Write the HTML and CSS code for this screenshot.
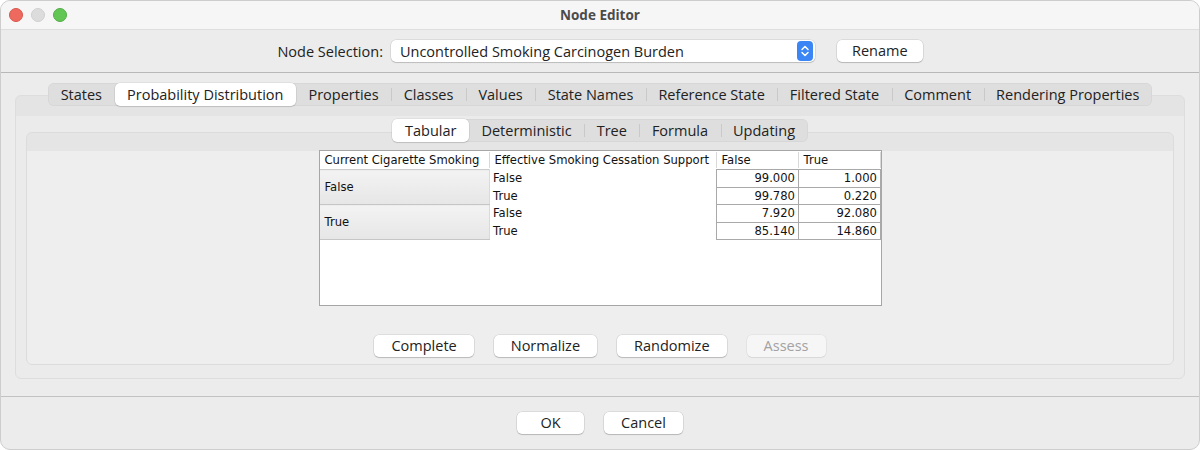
FILE: index.html
```html
<!DOCTYPE html>
<html lang="en">
<head>
  <meta charset="UTF-8" />
  <title>Node Editor</title>
  <link rel="stylesheet" href="styles.css">
</head>
<body>
  <div class="window">
    <div class="titlebar">
      <div class="lights">
        <span class="light red"></span>
        <span class="light gray"></span>
        <span class="light green"></span>
      </div>
      <div class="title">Node Editor</div>
    </div>

    <div class="header">
      <span class="label">Node Selection:</span>
      <div class="combo">
        <span>Uncontrolled Smoking Carcinogen Burden</span>
        <svg class="stepper" width="16" height="20" viewBox="0 0 16 20">
          <rect width="16" height="20" rx="4" fill="#3b86f4"/>
          <path d="M5 8.5 L8 5.5 L11 8.5" stroke="#fff" stroke-width="1.5" fill="none" stroke-linecap="round" stroke-linejoin="round"/>
          <path d="M5 11.5 L8 14.5 L11 11.5" stroke="#fff" stroke-width="1.5" fill="none" stroke-linecap="round" stroke-linejoin="round"/>
        </svg>
      </div>
      <button class="btn rename">Rename</button>
    </div>

    <div class="main">
      <div class="tabs">
        <span class="tab">States</span>
        <span class="tab active">Probability Distribution</span>
        <span class="tab">Properties</span>
        <span class="tab">Classes</span>
        <span class="tab">Values</span>
        <span class="tab">State Names</span>
        <span class="tab">Reference State</span>
        <span class="tab">Filtered State</span>
        <span class="tab">Comment</span>
        <span class="tab">Rendering Properties</span>
      </div>
      <div class="panel">
        <div class="tabs sub">
          <span class="tab active">Tabular</span>
          <span class="tab">Deterministic</span>
          <span class="tab">Tree</span>
          <span class="tab">Formula</span>
          <span class="tab">Updating</span>
        </div>
        <div class="inner">
          <div class="scroll">
            <table class="cpt">
              <colgroup>
                <col class="c1"><col class="c2"><col class="c3"><col class="c4">
              </colgroup>
              <thead>
                <tr>
                  <th>Current Cigarette Smoking</th>
                  <th>Effective Smoking Cessation Support</th>
                  <th>False</th>
                  <th>True</th>
                </tr>
              </thead>
              <tbody>
                <tr>
                  <td class="rowhead" rowspan="2">False</td>
                  <td class="state">False</td>
                  <td class="num">99.000</td>
                  <td class="num">1.000</td>
                </tr>
                <tr>
                  <td class="state">True</td>
                  <td class="num">99.780</td>
                  <td class="num">0.220</td>
                </tr>
                <tr>
                  <td class="rowhead" rowspan="2">True</td>
                  <td class="state">False</td>
                  <td class="num">7.920</td>
                  <td class="num">92.080</td>
                </tr>
                <tr>
                  <td class="state">True</td>
                  <td class="num">85.140</td>
                  <td class="num">14.860</td>
                </tr>
              </tbody>
            </table>
          </div>
          <div class="actions">
            <button class="btn">Complete</button>
            <button class="btn">Normalize</button>
            <button class="btn">Randomize</button>
            <button class="btn" disabled>Assess</button>
          </div>
        </div>
      </div>
    </div>

    <div class="footer">
      <button class="btn">OK</button>
      <button class="btn">Cancel</button>
    </div>
  </div>
</body>
</html>
```

FILE: styles.css
```css
body {
  margin: 0;
  background: #fff;
  font-family: 'Open Sans', sans-serif;
  font-size: 14.5px;
  color: #222;
}

.window {
  width: 1200px;
  height: 450px;
  box-sizing: border-box;
  border: 1px solid #cdcdcd;
  border-radius: 10px;
  background: #ececec;
  overflow: hidden;
  display: flex;
  flex-direction: column;
}

.titlebar {
  height: 28px;
  flex: none;
  background: #f6f6f6;
  border-bottom: 1px solid #dedede;
  display: flex;
  align-items: center;
  justify-content: center;
  position: relative;
}

.lights {
  position: absolute;
  left: 8px;
  top: 7px;
  display: flex;
  gap: 8px;
}

.light {
  width: 14px;
  height: 14px;
  border-radius: 50%;
  box-sizing: border-box;
}

.light.red { background: #ee6a5f; border: 1px solid #d9544a; }
.light.gray { background: #dcdcdc; border: 1px solid #cfcfcf; }
.light.green { background: #62c655; border: 1px solid #52ad46; }

.title {
  font-size: 13.5px;
  font-weight: bold;
  color: #4b4b4b;
}

.header {
  height: 42px;
  flex: none;
  border-bottom: 1px solid #b8b8b8;
  display: flex;
  align-items: center;
  justify-content: center;
}

.label {
  margin-right: 8px;
}

.combo {
  width: 424px;
  height: 22px;
  box-sizing: border-box;
  background: #fff;
  border-radius: 5px;
  box-shadow: 0 0 0 0.5px rgba(0,0,0,0.14), 0 1px 1px rgba(0,0,0,0.14);
  display: flex;
  align-items: center;
  justify-content: space-between;
  padding: 0 2px 0 9px;
  margin-right: 22px;
}

.btn {
  font-family: 'Open Sans', sans-serif;
  font-size: 14.5px;
  color: #222;
  height: 22px;
  min-width: 67px;
  padding: 0 17px;
  background: #fff;
  border: none;
  border-radius: 5px;
  box-shadow: 0 0 0 0.5px rgba(0,0,0,0.14), 0 1px 1px rgba(0,0,0,0.16);
  line-height: 22px;
}

.btn.rename {
  padding: 0 15px;
}

.btn:disabled {
  background: #f6f6f6;
  color: #a2a2a2;
  box-shadow: 0 0 0 0.5px rgba(0,0,0,0.07), 0 1px 1px rgba(0,0,0,0.06);
}

.main {
  flex: 1;
  padding: 10px 14px 16px;
}

.tabs {
  display: flex;
  justify-content: center;
  width: max-content;
  margin: 0 auto -11px;
  height: 23px;
  background: #dedede;
  border-radius: 6px;
  box-shadow: inset 0 0 0 0.5px rgba(0,0,0,0.06);
  position: relative;
}

.tab {
  display: flex;
  align-items: center;
  padding: 0 12.5px;
  line-height: 23px;
  background: linear-gradient(#c9c9c9, #c9c9c9) left center / 1px 13px no-repeat;
}

.tab:first-child,
.tab.active + .tab {
  background: none;
}

.tab.active {
  background: #fff;
  border-radius: 5px;
  box-shadow: 0 0 0 0.5px rgba(0,0,0,0.1), 0 1px 1px rgba(0,0,0,0.12);
}

.panel {
  height: 284px;
  box-sizing: border-box;
  border: 1px solid #dddddd;
  border-radius: 6px;
  background: linear-gradient(#e4e4e4 0, #e4e4e4 20px, #ebebeb 20px);
  padding: 23px 10px 13px;
}

.tabs.sub {
  margin-bottom: -10px;
}

.inner {
  height: 233px;
  box-sizing: border-box;
  border: 1px solid #dcdcdc;
  border-radius: 6px;
  background: linear-gradient(#e5e5e5 0, #e5e5e5 18px, #eeeeee 18px);
  padding: 17px 0 0;
}

.scroll {
  width: 563px;
  height: 156px;
  box-sizing: border-box;
  margin: 0 auto;
  background: #fff;
  border: 1px solid #a6a6a6;
}

.cpt {
  border-collapse: collapse;
  table-layout: fixed;
  width: 561px;
  font-family: 'DejaVu Sans', sans-serif;
  font-size: 11.6px;
  color: #111;
}

.c1 { width: 170px; }
.c2 { width: 227px; }
.c3 { width: 82px; }
.c4 { width: 82px; }

.cpt th {
  height: 18px;
  padding: 0 0 0 5px;
  font-weight: normal;
  text-align: left;
  white-space: nowrap;
  background: linear-gradient(#d9d9d9, #d9d9d9) right center / 1px 16px no-repeat;
}

.cpt td {
  height: 16.5px;
  padding: 0;
  white-space: nowrap;
}

.cpt .rowhead {
  padding-left: 5px;
  background: linear-gradient(#f3f3f3, #e6e6e6);
  border-top: 1px solid #cccccc;
  border-bottom: 1px solid #c6c6c6;
  border-right: 1px solid #dadada;
}

.cpt .state {
  padding-left: 3px;
}

.cpt .num {
  text-align: right;
  padding-right: 3px;
  border: 1px solid #a9a9a9;
}

.actions {
  display: flex;
  justify-content: center;
  gap: 20px;
  margin-top: 29px;
}

.footer {
  flex: none;
  height: 53px;
  box-sizing: border-box;
  border-top: 1px solid #c2c2c2;
  padding-top: 15px;
  display: flex;
  justify-content: center;
  gap: 20px;
}
```
